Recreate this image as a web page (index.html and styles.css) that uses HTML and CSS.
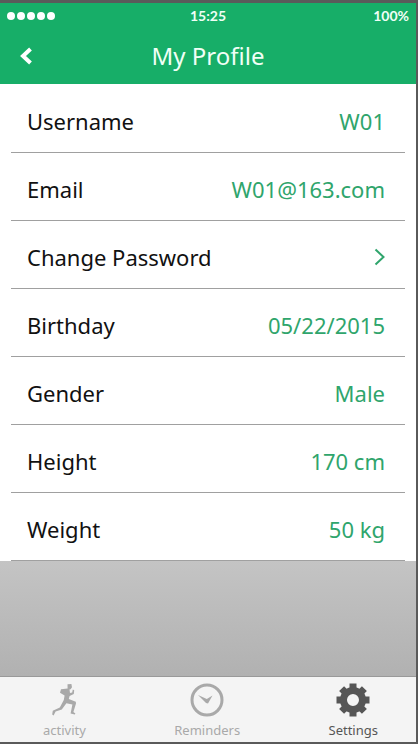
FILE: index.html
```html
<!DOCTYPE html>
<html lang="en">
<head>
<meta charset="utf-8">
<meta name="viewport" content="width=device-width, initial-scale=1">
<title>My Profile</title>
<link rel="stylesheet" href="styles.css">
</head>
<body>
<header class="header">
  <div class="status">
    <span class="signal"><i></i><i></i><i></i><i></i><i></i></span>
    <span class="time">15:25</span>
    <span class="battery">100%</span>
  </div>
  <div class="titlebar">
    <button class="back" type="button" aria-label="Back">
      <svg width="14" height="20" viewBox="0 0 14 20"><path d="M11.500 3 4 10l7.500 7" fill="none" stroke="currentColor" stroke-width="4"/></svg>
    </button>
    <h1 class="title">My Profile</h1>
  </div>
</header>
<main class="main">
  <ul class="list">
    <li class="row"><span>Username</span><span class="value">W01</span></li>
    <li class="row"><span>Email</span><span class="value">W01@163.com</span></li>
    <li><a class="row" href="#password"><span>Change Password</span>
      <svg class="chevron" width="12" height="18" viewBox="0 0 12 18"><path d="M2.500 1.500 10.500 9l-8 7.500" fill="none" stroke="currentColor" stroke-width="2"/></svg></a></li>
    <li class="row"><span>Birthday</span><span class="value">05/22/2015</span></li>
    <li class="row"><span>Gender</span><span class="value">Male</span></li>
    <li class="row"><span>Height</span><span class="value">170 cm</span></li>
    <li class="row"><span>Weight</span><span class="value">50 kg</span></li>
  </ul>
</main>
<nav class="tabs">
  <a class="tab" href="#activity">
    <svg width="34" height="34" viewBox="0 0 34 34" fill="currentColor">
      <path d="M20.500 1.200 24.400 0.900 25 4.200 23.600 6.200 22.500 6.600 23 10 25.200 9.400 25.800 6.600 27.200 7.200 26.800 11 22.600 13 21.800 16 28.800 18.800 29 20.600 26.400 29 28.400 30.600 27.800 31.600 23.600 30.400 25.400 21.600 19.400 20.200 14.800 26.600 8.600 28.400 6.600 32.600 5.200 31.600 5.800 27.800 12.800 24.600 16.800 17 17.600 12.600 13 9.800 14 6.200 20.600 5.400Z"/>
    </svg>
    <span>activity</span>
  </a>
  <a class="tab" href="#reminders">
    <svg width="34" height="34" viewBox="0 0 34 34">
      <circle cx="17" cy="17" r="15" fill="none" stroke="currentColor" stroke-width="3"/>
      <path d="M8 12 16.800 16 22.500 12.500 18 20.500 16 20Z" fill="currentColor"/>
    </svg>
    <span>Reminders</span>
  </a>
  <a class="tab tab-active" href="#settings" aria-current="page">
    <svg width="34" height="34" viewBox="0 0 34 34">
      <g stroke="currentColor" stroke-width="7">
        <path d="M17 0.500v8M17 25.500v8M0.500 17h8M25.500 17h8M5.600 5.600l5.600 5.600M22.800 22.800l5.600 5.600M28.400 5.600l-5.600 5.600M11.200 22.800l-5.600 5.600"/>
        <circle cx="17" cy="17" r="9.500" fill="none"/>
      </g>
    </svg>
    <span>Settings</span>
  </a>
</nav>
</body>
</html>
```
FILE: styles.css
```css
* {
  box-sizing: border-box;
}

body {
  margin: 0;
  min-height: 100vh;
  display: flex;
  flex-direction: column;
  border: solid #5a5a5a;
  border-width: 3px 2px 2px 0;
  background: #fff;
  color: #111;
  font-family: "Noto Sans", "Open Sans", sans-serif;
}

a {
  color: inherit;
  text-decoration: none;
}

svg {
  display: block;
}

.header {
  background: #17ae68;
  color: #f0fff6;
}

.status {
  display: grid;
  grid-template-columns: 1fr auto 1fr;
  align-items: center;
  height: 26px;
  padding: 0 7px;
  font: 700 14px/16px Lato, sans-serif;
}

.signal {
  display: flex;
  gap: 2px;
}

.signal i {
  width: 8px;
  height: 8px;
  border-radius: 50%;
  background: #fff;
}

.battery {
  text-align: right;
}

.titlebar {
  display: grid;
  grid-template-columns: 52px 1fr 52px;
  align-items: center;
  height: 55px;
  padding-bottom: 2px;
}

.back {
  display: flex;
  justify-content: center;
  padding: 0;
  border: 0;
  background: none;
  color: #fff;
}

.title {
  margin: 0;
  text-align: center;
  font-size: 24px;
  font-weight: 400;
  line-height: 32px;
}

.main {
  flex: 1;
  background: linear-gradient(#c4c4c4, #b1b1b1) bottom / 100% 116px no-repeat;
}

.list {
  margin: 0;
  padding: 1px 11px 0;
  list-style: none;
  background: #fff;
}

.row {
  display: flex;
  justify-content: space-between;
  align-items: center;
  height: 68px;
  padding: 4px 20px 0 16px;
  border-bottom: 1px solid #a0a0a0;
  font-size: 22px;
  line-height: 30px;
}

.value,
.chevron {
  color: #2fa56c;
}

.tabs {
  display: flex;
  justify-content: space-between;
  padding: 0 38px 0 43px;
  border-top: 1px solid #999;
  background: #f4f4f4;
  color: #a9a9a9;
}

.tab {
  display: flex;
  flex-direction: column;
  align-items: center;
  gap: 4px;
  padding: 6px 0 3px;
  font-size: 13px;
  line-height: 18px;
}

.tab-active {
  color: #565656;
}
```
